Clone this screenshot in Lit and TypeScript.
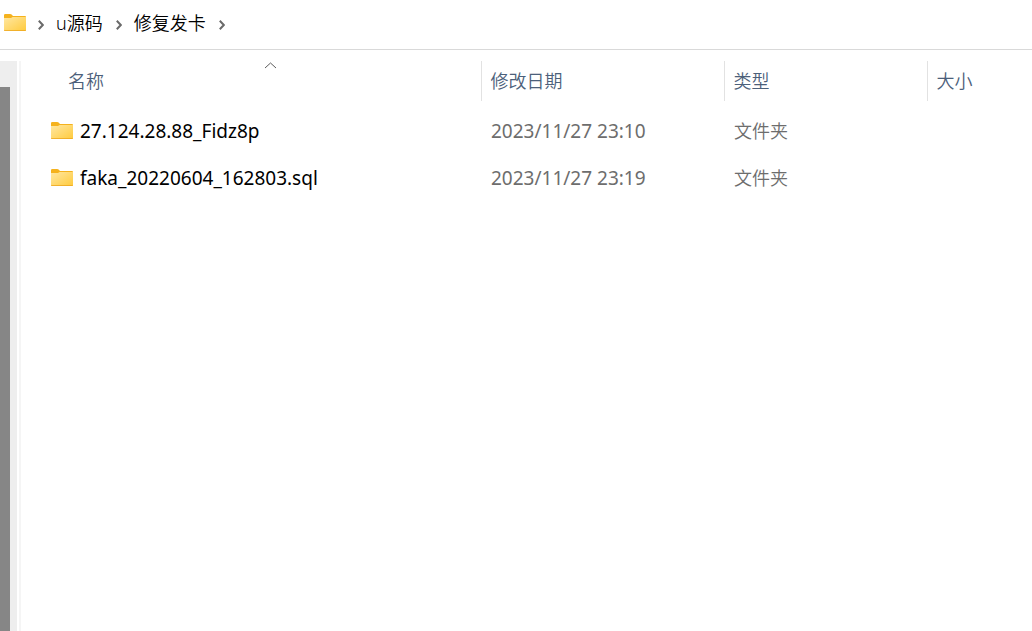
import { LitElement, html, css } from "lit";
import { customElement, property } from "lit/decorators.js";

interface Entry {
  name: string;
  modified: string;
  kind: string;
  size: string;
}

@customElement("folder-icon")
class FolderIcon extends LitElement {
  static styles = css`
    :host { display: block; flex: none; width: 22px; height: 18px; }
    svg { display: block; }
  `;
  render() {
    return html`<svg width="22" height="18" viewBox="0 0 22 18" aria-hidden="true">
      <defs>
        <linearGradient id="front" x1="0" y1="0" x2="1" y2="1">
          <stop offset="0" stop-color="#ffe7a2" />
          <stop offset="1" stop-color="#ffcb3d" />
        </linearGradient>
      </defs>
      <path d="M0 1.2Q0 0 1.2 0H6.2Q7 0 7.6 .6L9 2H21Q22 2 22 3V8H0Z" fill="#f5b21d" />
      <path d="M0 4H7L8.6 3H22V16Q22 17 21 17H1Q0 17 0 16Z" fill="url(#front)" />
      <path d="M0 15.8Q.2 16.2 1 16.2H21Q21.8 16.2 22 15.8V16Q22 17 21 17H1Q0 17 0 16Z" fill="#eda51c" />
    </svg>`;
  }
}

@customElement("crumb-bar")
class CrumbBar extends LitElement {
  @property({ attribute: false }) path: string[] = [];

  static styles = css`
    :host { display: block; border-bottom: 1px solid #d9d9d9; }
    nav { display: flex; align-items: center; height: 49px; padding: 0 4px; box-sizing: border-box; }
    folder-icon { margin-bottom: 4px; }
    .sep { display: block; flex: none; width: 6px; height: 10px; margin: 0 12px; }
    a {
      padding-right: 1px; margin-bottom: 4px; color: #000; font-size: 18px; font-weight: 350;
      line-height: 24px; text-decoration: none; white-space: nowrap;
    }
    a:hover { background: #f0f0f0; }
  `;

  private sep() {
    return html`<svg class="sep" viewBox="0 0 6 10" aria-hidden="true">
      <path d="M.8 .8L4.8 5L.8 9.2" fill="none" stroke="#6a6a6a" stroke-width="2" />
    </svg>`;
  }

  render() {
    return html`<nav aria-label="路径">
      <folder-icon></folder-icon>
      ${this.sep()}
      ${this.path.map((p) => html`<a href="#">${p}</a>${this.sep()}`)}
    </nav>`;
  }
}

@customElement("file-list")
class FileList extends LitElement {
  @property({ attribute: false }) entries: Entry[] = [];

  static styles = css`
    :host { display: block; flex: 1; min-width: 0; }
    table { width: 100%; border-collapse: collapse; table-layout: fixed; }
    .c-name { width: 460px; }
    .c-date { width: 243px; }
    .c-type { width: 203px; }
    th { padding: 0; font-weight: 350; text-align: left; border-left: 1px solid #e2e2e2; }
    th:first-child { border-left: 0; }
    button {
      position: relative; display: flex; align-items: center; width: 100%; height: 40px;
      padding: 0 9px 2px; border: 0; background: none; color: #4c607a;
      font: inherit; font-size: 18px; text-align: left; white-space: nowrap;
    }
    th:first-child button { padding-left: 47px; }
    .arrow { position: absolute; top: 1px; left: calc(50% + 13px); }
    .gap td { height: 6px; }
    td { height: 47px; padding: 0 0 0 10px; color: #6d6d6d; font-size: 19px; line-height: 24px; white-space: nowrap; }
    td:first-child { padding-left: 30px; }
    .type { font-size: 18px; font-weight: 350; }
    .name { display: flex; align-items: center; gap: 7px; color: #000; }
  `;

  render() {
    return html`<table>
      <colgroup><col class="c-name" /><col class="c-date" /><col class="c-type" /><col /></colgroup>
      <thead>
        <tr>
          <th scope="col" aria-sort="ascending">
            <button type="button">名称
              <svg class="arrow" width="13" height="7" viewBox="0 0 13 7" aria-hidden="true">
                <path d="M1 6L6.5 1L12 6" fill="none" stroke="#5c5c5c" />
              </svg>
            </button>
          </th>
          <th scope="col"><button type="button">修改日期</button></th>
          <th scope="col"><button type="button">类型</button></th>
          <th scope="col"><button type="button">大小</button></th>
        </tr>
      </thead>
      <tbody>
        <tr class="gap"><td colspan="4"></td></tr>
        ${this.entries.map((e) => html`<tr>
          <td><div class="name"><folder-icon></folder-icon><span>${e.name}</span></div></td>
          <td>${e.modified}</td>
          <td class="type">${e.kind}</td>
          <td>${e.size}</td>
        </tr>`)}
      </tbody>
    </table>`;
  }
}

@customElement("app-root")
class AppRoot extends LitElement {
  static styles = css`
    :host {
      display: flex; flex-direction: column; min-height: 100vh; background: #fff;
      font-family: "Noto Sans", "Noto Sans CJK SC", sans-serif;
    }
    .body { display: flex; flex: 1; padding-top: 11px; }
    .track { flex: none; width: 17px; padding-top: 26px; box-sizing: border-box; background: #eee; display: flex; }
    .thumb { width: 10px; background: #868686; }
    .splitter { flex: none; width: 2px; margin-left: 2px; background: #f5f5f5; }
  `;

  private entries: Entry[] = [
    { name: "27.124.28.88_Fidz8p", modified: "2023/11/27 23:10", kind: "文件夹", size: "" },
    { name: "faka_20220604_162803.sql", modified: "2023/11/27 23:19", kind: "文件夹", size: "" },
  ];

  render() {
    return html`
      <crumb-bar .path=${["u源码", "修复发卡"]}></crumb-bar>
      <div class="body">
        <div class="track"><div class="thumb"></div></div>
        <div class="splitter"></div>
        <file-list .entries=${this.entries}></file-list>
      </div>
    `;
  }
}
